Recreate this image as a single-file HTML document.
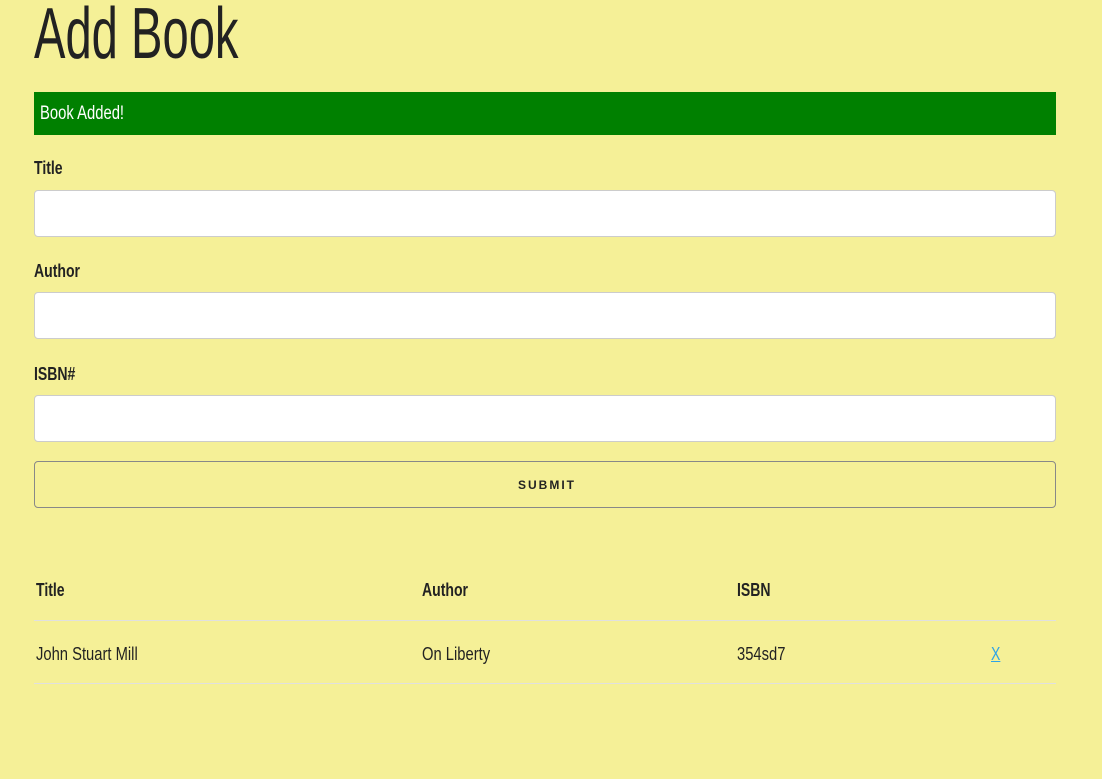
<!DOCTYPE html>
<html><head><style>
body{margin:0;background:#f5f097;width:1102px;height:779px;position:relative;overflow:hidden;font-family:"Liberation Sans",sans-serif;color:#222}
.t{position:absolute;white-space:nowrap;transform:scaleX(.78);transform-origin:left center;line-height:1}
.in{position:absolute;left:34px;width:1020px;height:45px;background:#fff;border:1px solid #ccc;border-radius:4px}
.hr{position:absolute;left:34px;width:1022px;height:1px;background:#e0e0e0}
</style></head><body>
<div class="t" style="left:34px;top:-2px;font-size:72px;transform:scaleX(.655)">Add Book</div>
<div style="position:absolute;left:34px;top:92px;width:1022px;height:43px;background:#008000"></div>
<div class="t" style="left:40px;top:104px;font-size:19px;color:#fff">Book Added!</div>
<div class="t" style="left:34px;top:159px;font-size:18px;font-weight:bold">Title</div>
<div class="in" style="top:190px"></div>
<div class="t" style="left:34px;top:262px;font-size:18px;font-weight:bold">Author</div>
<div class="in" style="top:292px"></div>
<div class="t" style="left:34px;top:365px;font-size:18px;font-weight:bold">ISBN#</div>
<div class="in" style="top:395px"></div>
<div style="position:absolute;left:34px;top:461px;width:1020px;height:45px;border:1px solid #888;border-radius:4px;text-align:center;font-size:12px;font-weight:bold;letter-spacing:2px"><span style="position:absolute;left:0;right:-4px;top:17px;line-height:12px">SUBMIT</span></div>
<div class="t" style="left:36px;top:581px;font-size:18px;font-weight:bold">Title</div>
<div class="t" style="left:422px;top:581px;font-size:18px;font-weight:bold">Author</div>
<div class="t" style="left:737px;top:581px;font-size:18px;font-weight:bold">ISBN</div>
<div class="hr" style="top:620px"></div>
<div class="t" style="left:36px;top:645px;font-size:18px;transform:scaleX(.82)">John Stuart Mill</div>
<div class="t" style="left:422px;top:645px;font-size:18px;transform:scaleX(.82)">On Liberty</div>
<div class="t" style="left:737px;top:645px;font-size:18px;transform:scaleX(.82)">354sd7</div>
<div class="t" style="left:991px;top:645px;font-size:18px;color:#2fa4e7;text-decoration:underline">X</div>
<div class="hr" style="top:683px"></div>
</body></html>
